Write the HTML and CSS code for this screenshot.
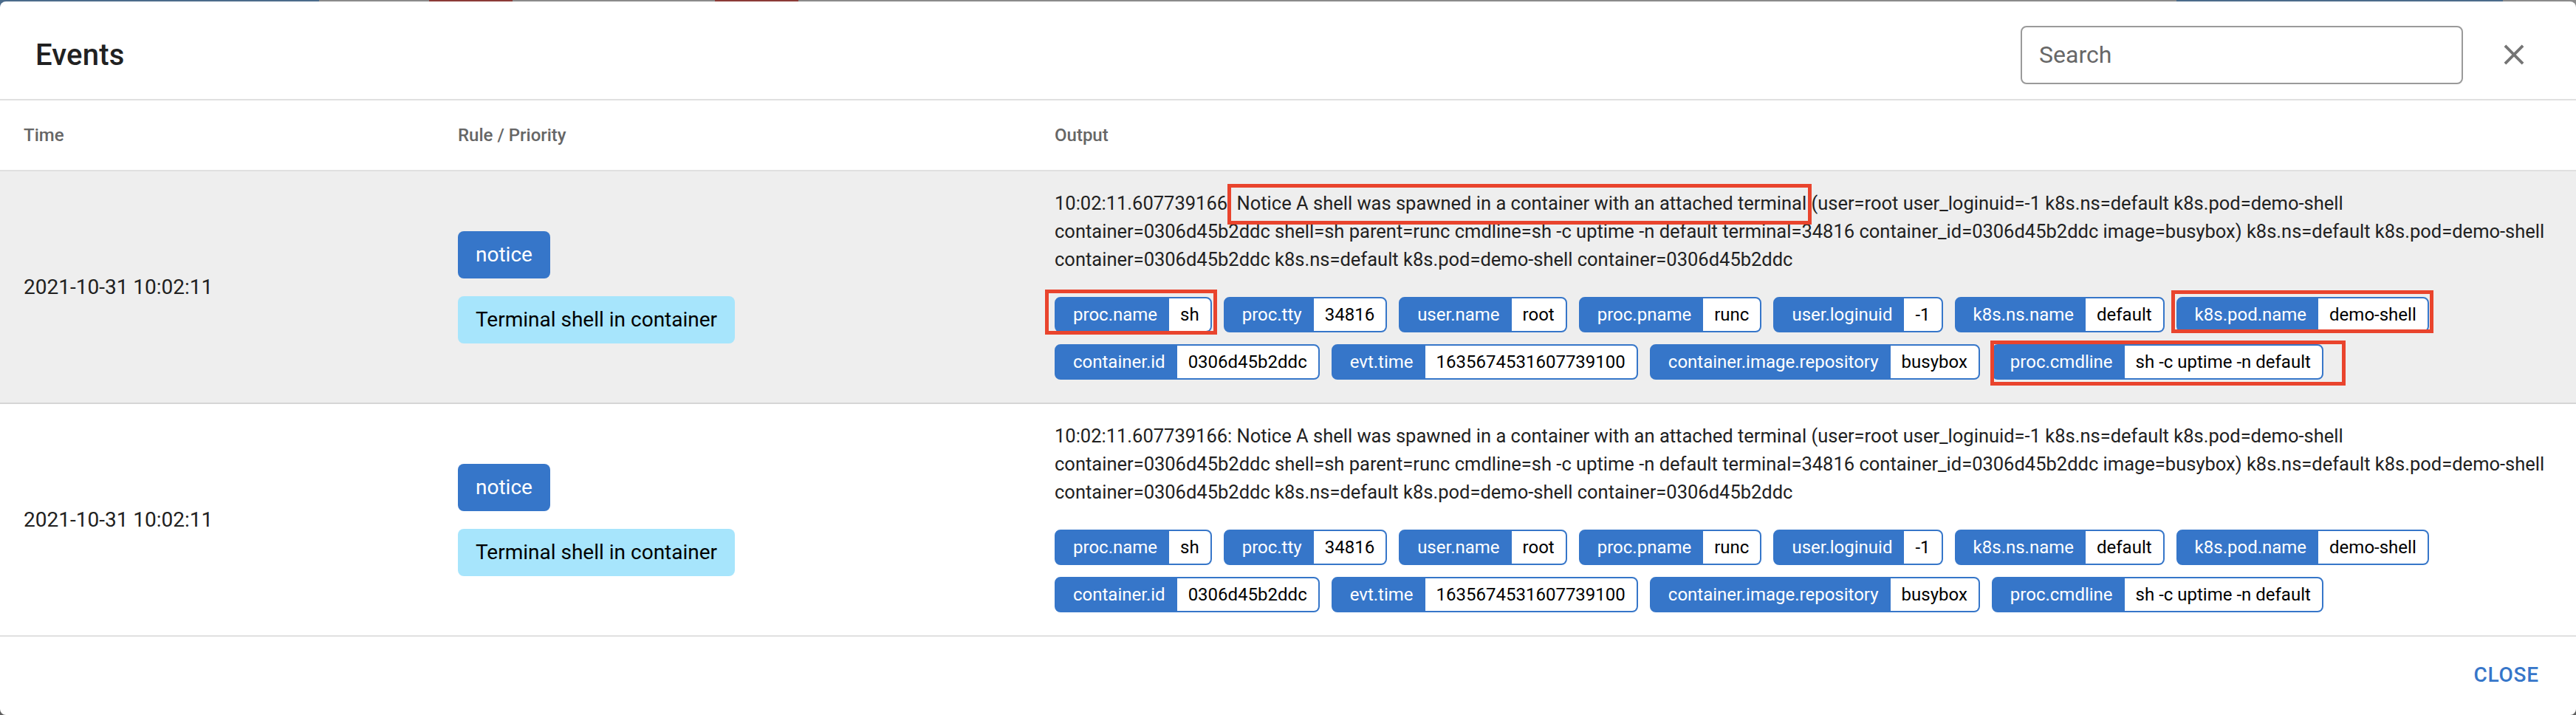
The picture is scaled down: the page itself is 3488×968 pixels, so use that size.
FILE: index.html
```html
<!DOCTYPE html>
<html lang="en">
<head>
<meta charset="utf-8">
<title>Events</title>
<link rel="stylesheet" href="styles.css">
</head>
<body>
<div class="dialog">
  <div class="dlg-head">
    <h2 class="dlg-title">Events</h2>
    <input class="search" type="text" placeholder="Search">
    <span class="close-icon" aria-label="close">
      <svg viewBox="0 0 24 24" width="46" height="46"><path fill="#757575" d="M19 6.41L17.59 5 12 10.59 6.41 5 5 6.41 10.59 12 5 17.59 6.41 19 12 13.41 17.59 19 19 17.59 13.41 12z"/></svg>
    </span>
  </div>

  <div class="tbl">
    <div class="row head">
      <div class="cell">Time</div>
      <div class="cell">Rule / Priority</div>
      <div class="cell">Output</div>
    </div>

    <div class="row ev selected">
      <div class="cell time">2021-10-31 10:02:11</div>
      <div class="cell rule">
        <span class="badge prio">notice</span>
        <span class="badge rulename">Terminal shell in container</span>
      </div>
      <div class="cell out">
        <p class="out-text">10:02:11.607739166: <span class="mark mark-text">Notice A shell was spawned in a container with an attached terminal</span> (user=root user_loginuid=-1 k8s.ns=default k8s.pod=demo-shell<br>container=0306d45b2ddc shell=sh parent=runc cmdline=sh -c uptime -n default terminal=34816 container_id=0306d45b2ddc image=busybox) k8s.ns=default k8s.pod=demo-shell<br>container=0306d45b2ddc k8s.ns=default k8s.pod=demo-shell container=0306d45b2ddc</p>
        <div class="chips">
          <span class="chip mark mark-a"><span class="k">proc.name</span><span class="v">sh</span></span>
          <span class="chip"><span class="k">proc.tty</span><span class="v">34816</span></span>
          <span class="chip"><span class="k">user.name</span><span class="v">root</span></span>
          <span class="chip"><span class="k">proc.pname</span><span class="v">runc</span></span>
          <span class="chip"><span class="k">user.loginuid</span><span class="v">-1</span></span>
          <span class="chip"><span class="k">k8s.ns.name</span><span class="v">default</span></span>
          <span class="chip mark mark-b"><span class="k">k8s.pod.name</span><span class="v">demo-shell</span></span>
          <span class="chip"><span class="k">container.id</span><span class="v">0306d45b2ddc</span></span>
          <span class="chip"><span class="k">evt.time</span><span class="v">1635674531607739100</span></span>
          <span class="chip"><span class="k">container.image.repository</span><span class="v">busybox</span></span>
          <span class="chip mark mark-c"><span class="k">proc.cmdline</span><span class="v">sh -c uptime -n default</span></span>
        </div>
      </div>
    </div>

    <div class="row ev">
      <div class="cell time">2021-10-31 10:02:11</div>
      <div class="cell rule">
        <span class="badge prio">notice</span>
        <span class="badge rulename">Terminal shell in container</span>
      </div>
      <div class="cell out">
        <p class="out-text">10:02:11.607739166: Notice A shell was spawned in a container with an attached terminal (user=root user_loginuid=-1 k8s.ns=default k8s.pod=demo-shell<br>container=0306d45b2ddc shell=sh parent=runc cmdline=sh -c uptime -n default terminal=34816 container_id=0306d45b2ddc image=busybox) k8s.ns=default k8s.pod=demo-shell<br>container=0306d45b2ddc k8s.ns=default k8s.pod=demo-shell container=0306d45b2ddc</p>
        <div class="chips">
          <span class="chip"><span class="k">proc.name</span><span class="v">sh</span></span>
          <span class="chip"><span class="k">proc.tty</span><span class="v">34816</span></span>
          <span class="chip"><span class="k">user.name</span><span class="v">root</span></span>
          <span class="chip"><span class="k">proc.pname</span><span class="v">runc</span></span>
          <span class="chip"><span class="k">user.loginuid</span><span class="v">-1</span></span>
          <span class="chip"><span class="k">k8s.ns.name</span><span class="v">default</span></span>
          <span class="chip"><span class="k">k8s.pod.name</span><span class="v">demo-shell</span></span>
          <span class="chip"><span class="k">container.id</span><span class="v">0306d45b2ddc</span></span>
          <span class="chip"><span class="k">evt.time</span><span class="v">1635674531607739100</span></span>
          <span class="chip"><span class="k">container.image.repository</span><span class="v">busybox</span></span>
          <span class="chip"><span class="k">proc.cmdline</span><span class="v">sh -c uptime -n default</span></span>
        </div>
      </div>
    </div>
  </div>

  <div class="dlg-foot">
    <button class="btn-close" type="button">Close</button>
  </div>
</div>
</body>
</html>
```

FILE: styles.css
```css
* { box-sizing: border-box; }

html, body {
  margin: 0;
  padding: 0;
  height: 968px;
  overflow: hidden;
}

body {
  font-family: Roboto, "Liberation Sans", Arial, sans-serif;
  color: #212121;
  background:
    linear-gradient(to right,
      #4b6b8b 0 432px, #8b8b8b 432px 581px, #8c3b37 581px 694px,
      #8b8b8b 694px 968px, #8c3b37 968px 1081px, #8b8b8b 1081px 2947px,
      #4b6b8b 2947px 3389px, #8b8b8b 3389px) top / 100% 40px no-repeat,
    #5e5e5e;
}

.dialog {
  margin-top: 2px;
  height: 966px;
  background: #fff;
  border-radius: 8px;
  overflow: hidden;
  display: flex;
  flex-direction: column;
}

/* header */
.dlg-head {
  height: 134px;
  padding: 12px 61px 0 48px;
  display: flex;
  align-items: center;
  border-bottom: 2px solid #e0e0e0;
}

.dlg-title {
  flex: 1;
  margin: 0;
  font-size: 40px;
  font-weight: 500;
  color: #212121;
  letter-spacing: 0.2px;
}

.search {
  width: 599px;
  height: 79px;
  border: 2px solid #9a9a9a;
  border-radius: 8px;
  padding: 0 23px;
  font-family: Roboto, "Liberation Sans", Arial, sans-serif;
  font-size: 32px;
  color: #212121;
  background: #fff;
  outline: none;
}
.search::placeholder { color: #676767; opacity: 1; }

.close-icon {
  width: 46px;
  height: 46px;
  margin-left: 46px;
  display: flex;
}

/* table */
.tbl { display: flex; flex-direction: column; }

.row {
  display: grid;
  grid-template-columns: 588px 808px 1fr;
  border-bottom: 2px solid #e0e0e0;
}

.cell { padding: 0 32px; }

.row.head {
  height: 96px;
  align-items: center;
  font-size: 24px;
  font-weight: 500;
  color: #666;
}

.row.ev { align-items: center; }
.row.ev.selected { background: #eeeeee; border-bottom-color: #d6d6d6; }

.time {
  font-size: 28px;
  color: #212121;
}

.rule {
  display: flex;
  flex-direction: column;
  align-items: flex-start;
  gap: 24px;
}

.badge {
  display: inline-block;
  height: 64px;
  line-height: 64px;
  padding: 0 24px;
  border-radius: 8px;
  font-size: 28px;
}
.badge.prio { background: #3676c9; color: #fff; }
.badge.rulename { background: #a7e5fc; color: #000; }

.out {
  padding-top: 24px;
  padding-bottom: 31px;
}

.out-text {
  margin: 0 0 32px;
  font-size: 25.5px;
  line-height: 38px;
  color: #212121;
  white-space: nowrap;
}

.chips {
  display: flex;
  flex-wrap: wrap;
  gap: 16px;
}

.chip {
  display: inline-flex;
  height: 48px;
  border: 2px solid #3676c9;
  background: #3676c9;
  border-radius: 8px;
  font-size: 24px;
  line-height: 44px;
}
.chip .k { color: #fff; padding: 0 16px 0 23px; }
.chip .v {
  color: #000;
  background: #fff;
  padding: 0 15px;
  border-radius: 0 6px 6px 0;
}

/* red annotation boxes drawn over the screenshot */
.mark { position: relative; }
.mark::after {
  content: "";
  position: absolute;
  border: 5px solid #e9442d;
  pointer-events: none;
}
.mark-text::after { top: -11px; right: -7px; bottom: -14px; left: -13px; }
.mark-a::after { top: -12px; right: -9px; bottom: -5px; left: -15px; }
.mark-b::after { top: -11px; right: -8px; bottom: -3px; left: -9px; }
.mark-c::after { top: -7px; right: -32px; bottom: -10px; left: -4px; }

/* footer */
.dlg-foot {
  flex: 1;
  display: flex;
  justify-content: flex-end;
  align-items: center;
  padding: 0 34px 4px 0;
}

.btn-close {
  border: 0;
  background: transparent;
  padding: 12px 16px;
  font-family: Roboto, "Liberation Sans", Arial, sans-serif;
  font-size: 28px;
  font-weight: 500;
  letter-spacing: 0.8px;
  text-transform: uppercase;
  color: #3676c9;
}
```
